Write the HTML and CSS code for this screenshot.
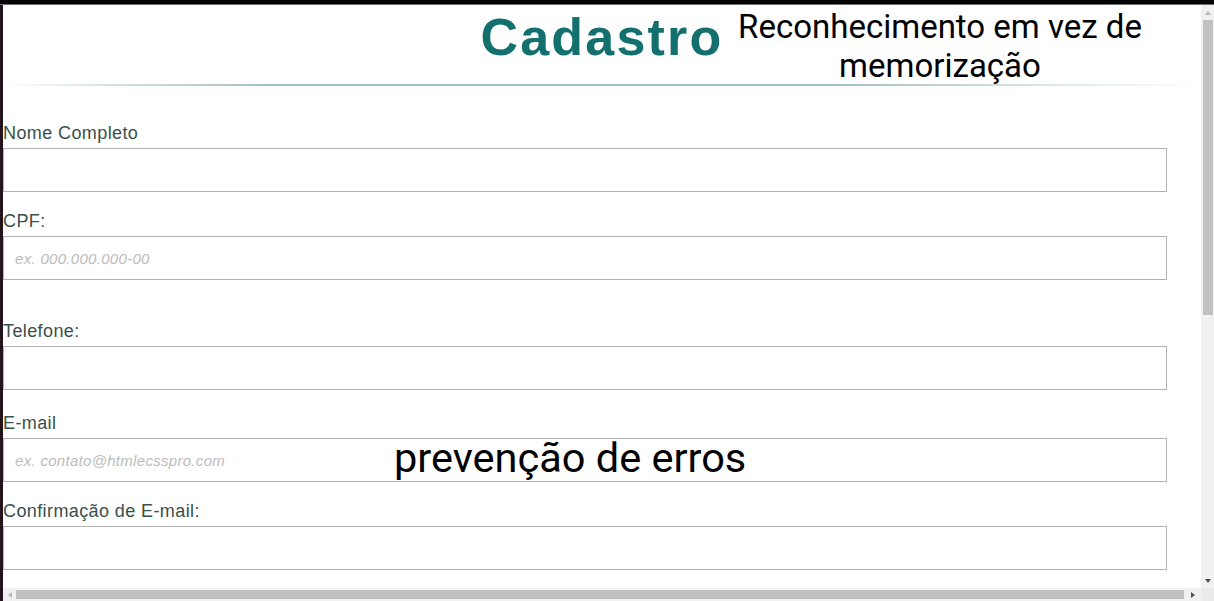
FILE: index.html
```html
<!DOCTYPE html>
<html lang="pt-BR">
<head>
<meta charset="utf-8">
<title>Cadastro</title>
<link rel="stylesheet" href="styles.css">
</head>
<body>
<div class="screen">
  <div class="topbar"></div>
  <div class="window">
    <div class="edge"></div>
    <div class="viewport">
      <div class="viewport-main">
        <main class="page">
          <header class="page-header">
            <h1 class="title">Cadastro</h1>
            <div class="divider"></div>
          </header>
          <form class="form">
            <div class="field">
              <label class="label" for="nome">Nome Completo</label>
              <input class="input" id="nome" type="text">
            </div>
            <div class="field">
              <label class="label" for="cpf">CPF:</label>
              <input class="input" id="cpf" type="text" placeholder="ex. 000.000.000-00">
              <div class="hint"></div>
            </div>
            <div class="field field-loose">
              <label class="label" for="tel">Telefone:</label>
              <input class="input" id="tel" type="text">
            </div>
            <div class="field">
              <label class="label" for="email">E-mail</label>
              <input class="input" id="email" type="email" placeholder="ex. contato@htmlecsspro.com">
            </div>
            <div class="field">
              <label class="label" for="email2">Confirmação de E-mail:</label>
              <input class="input" id="email2" type="email">
            </div>
          </form>
        </main>
        <div class="vscroll">
          <div class="sb-btn"><span class="arrow arrow-up"></span></div>
          <div class="vthumb"></div>
          <div class="sb-fill"></div>
          <div class="sb-btn"><span class="arrow arrow-down"></span></div>
        </div>
      </div>
      <div class="hscroll-row">
        <div class="hscroll">
          <div class="sb-btn-h"><span class="arrow arrow-left"></span></div>
          <div class="hthumb"></div>
          <div class="sb-btn-h sb-btn-right"><span class="arrow arrow-right"></span></div>
        </div>
        <div class="corner"></div>
      </div>
    </div>
  </div>
  <div class="note note-top">
    <span class="note-line">Reconhecimento em vez de</span>
    <span class="note-line">memorização</span>
  </div>
  <div class="note note-form">prevenção de erros</div>
</div>
</body>
</html>
```

FILE: styles.css
```css
html, body {
  margin: 0;
  padding: 0;
  background: #ffffff;
}

.screen {
  position: relative;
  width: 1214px;
  height: 601px;
  display: flex;
  flex-direction: column;
  overflow: hidden;
  font-family: "Liberation Sans", Arial, sans-serif;
}

.topbar {
  height: 4px;
  background: #050505;
  border-bottom: 1px solid #6e6e6e;
  flex: none;
}

.window {
  flex: 1;
  display: flex;
  min-height: 0;
}

.edge {
  width: 3px;
  flex: none;
  background: #23141e;
}

.viewport {
  flex: 1;
  display: flex;
  flex-direction: column;
  min-width: 0;
}

.viewport-main {
  flex: 1;
  display: flex;
  min-height: 0;
}

.page {
  flex: 1;
  min-width: 0;
  overflow: hidden;
  background: #ffffff;
}

.page-header {
  padding-top: 2px;
}

.title {
  margin: 0;
  text-align: center;
  font-family: "Liberation Sans", Arial, sans-serif;
  font-weight: bold;
  font-size: 52px;
  line-height: 60px;
  letter-spacing: 2.2px;
  color: #13706f;
}

.divider {
  margin-top: 17px;
  height: 2px;
  background: linear-gradient(to right, rgba(169, 196, 198, 0) 0%, rgba(169, 196, 198, 0.45) 8%, #a4c1c3 22%, #a4c1c3 70%, rgba(169, 196, 198, 0.4) 88%, rgba(169, 196, 198, 0) 100%);
}

.form {
  padding-top: 36px;
}

.field {
  margin-bottom: 18px;
}

.field-loose {
  margin-bottom: 22px;
}

.label {
  display: block;
  font-size: 18px;
  line-height: 22px;
  letter-spacing: 0.4px;
  color: #38504b;
  margin-bottom: 4px;
}

.input {
  display: block;
  box-sizing: border-box;
  width: 1164px;
  height: 44px;
  margin: 0;
  padding: 0 11px;
  border: 1px solid #b3b3b3;
  border-radius: 0;
  background: #ffffff;
  font-family: "Liberation Sans", Arial, sans-serif;
  font-size: 15px;
  letter-spacing: 0.3px;
  color: #333333;
  outline: none;
}

.input::placeholder {
  color: #bcbcbc;
  font-style: italic;
}

.hint {
  height: 22px;
}

/* scrollbars */
.vscroll {
  width: 13px;
  flex: none;
  background: #f1f1f1;
  display: flex;
  flex-direction: column;
}

.sb-btn {
  height: 15px;
  flex: none;
  display: flex;
  align-items: center;
  justify-content: center;
}

.vthumb {
  height: 295px;
  margin: 0 1px 0 2px;
  background: #c1c1c1;
  flex: none;
}

.sb-fill {
  flex: 1;
}

.hscroll-row {
  height: 13px;
  flex: none;
  display: flex;
}

.hscroll {
  flex: 1;
  display: flex;
  background: #f1f1f1;
}

.sb-btn-h {
  width: 13px;
  flex: none;
  display: flex;
  align-items: center;
  justify-content: center;
}

.sb-btn-right {
  width: 17px;
}

.hthumb {
  flex: 1;
  margin: 2px 0;
  background: #c1c1c1;
}

.corner {
  width: 13px;
  flex: none;
  background: #ebebeb;
}

.arrow {
  width: 0;
  height: 0;
  display: block;
}

.arrow-up {
  border-left: 3px solid transparent;
  border-right: 3px solid transparent;
  border-bottom: 4px solid #b8b8b8;
}

.arrow-down {
  border-left: 3px solid transparent;
  border-right: 3px solid transparent;
  border-top: 4px solid #505050;
}

.arrow-left {
  border-top: 3px solid transparent;
  border-bottom: 3px solid transparent;
  border-right: 4px solid #b8b8b8;
}

.arrow-right {
  border-top: 3px solid transparent;
  border-bottom: 3px solid transparent;
  border-left: 4px solid #505050;
}

/* annotations laid over the screenshot */
.note {
  position: absolute;
  font-family: Roboto, "Liberation Sans", sans-serif;
  color: #000000;
  white-space: nowrap;
}

.note-top {
  top: 7px;
  left: 730px;
  width: 420px;
  display: flex;
  flex-direction: column;
  align-items: center;
  font-size: 33px;
  line-height: 39px;
}

.note-line {
  display: block;
}

.note-form {
  top: 434px;
  left: 394px;
  font-size: 41.5px;
  line-height: 48px;
}
```
